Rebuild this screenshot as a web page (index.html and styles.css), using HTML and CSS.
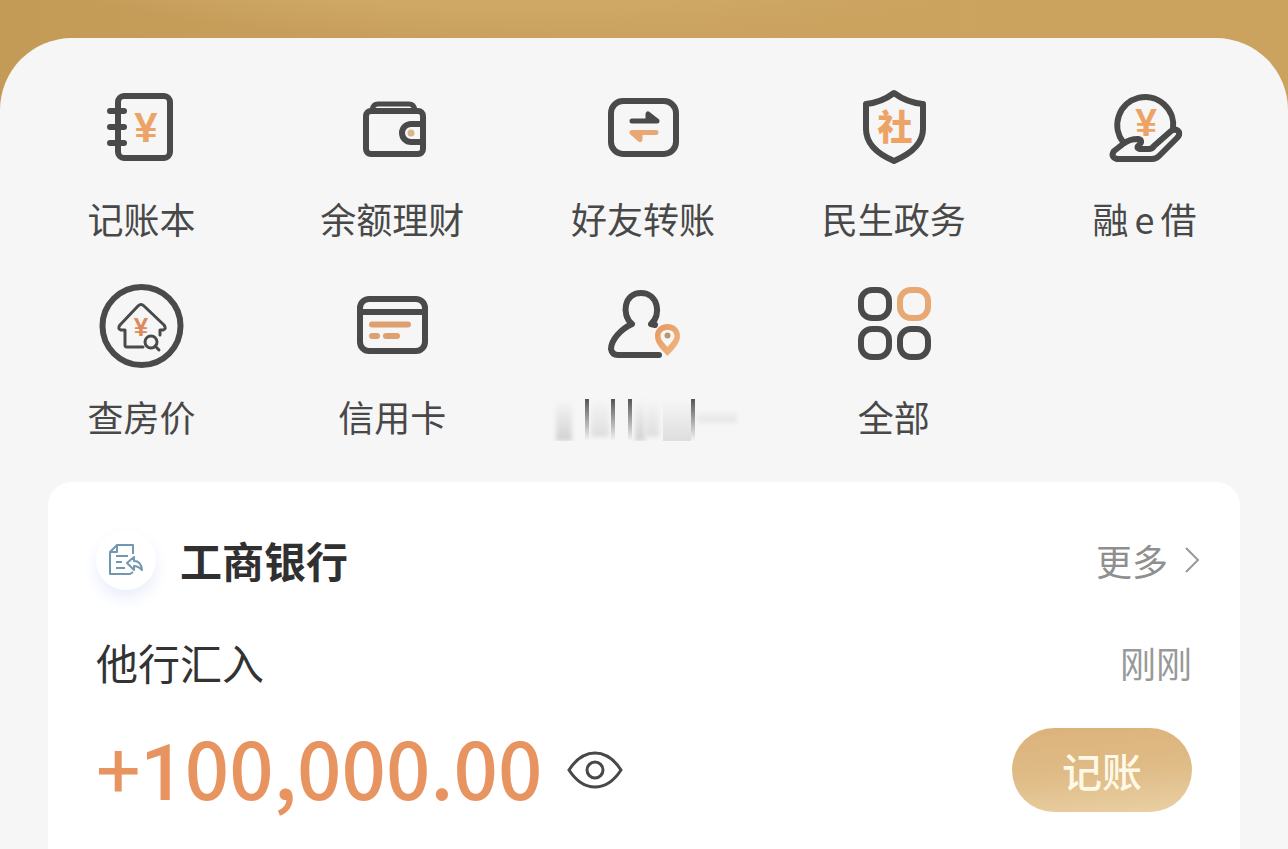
FILE: index.html
```html
<!DOCTYPE html>
<html lang="zh-CN">
<head>
  <meta charset="UTF-8">
  <meta name="viewport" content="width=device-width, initial-scale=1.0">
  <title>工商银行</title>
  <link rel="stylesheet" href="styles.css">
</head>
<body>
  <!-- 渐变色定义 -->
  <svg class="defs" width="0" height="0" aria-hidden="true">
    <defs>
      <linearGradient id="orange" x1="0" y1="0" x2="1" y2="1">
        <stop offset="0" stop-color="#e8955f"/>
        <stop offset="1" stop-color="#efbb85"/>
      </linearGradient>
      <linearGradient id="bar" x1="0" y1="0" x2="0" y2="1">
        <stop offset="0" stop-color="#555"/>
        <stop offset="1" stop-color="#f6f6f6"/>
      </linearGradient>
      <linearGradient id="haze" x1="0" y1="0" x2="0" y2="1">
        <stop offset="0" stop-color="#f6f6f6"/>
        <stop offset="1" stop-color="#d2d2d2"/>
      </linearGradient>
      <linearGradient id="soft" x1="0" y1="0" x2="0" y2="1">
        <stop offset="0" stop-color="#f6f6f6"/>
        <stop offset="1" stop-color="#dedede"/>
      </linearGradient>
    </defs>
  </svg>

  <main class="panel">
    <nav class="menu">
      <a class="menu-item" href="#">
        <svg class="icon" viewBox="0 0 88 88">
          <rect x="21" y="13" width="52" height="62" rx="6"/>
          <path d="M13 28h14M13 44h14M13 60h14"/>
          <text class="glyph yen" x="49" y="59" font-size="42">¥</text>
        </svg>
        <span>记账本</span>
      </a>
      <a class="menu-item" href="#">
        <svg class="icon" viewBox="0 0 88 88">
          <rect x="18" y="28" width="57" height="43" rx="5"/>
          <path class="mid" d="M24 27q1-6 6-6h31q5 0 6 6"/>
          <path d="M74 41H63a9 9 0 0 0 0 18h11"/>
          <circle class="dot" cx="63" cy="50" r="3.5"/>
        </svg>
        <span>余额理财</span>
      </a>
      <a class="menu-item" href="#">
        <svg class="icon" viewBox="0 0 88 88">
          <rect x="12" y="18" width="65" height="53" rx="12"/>
          <path class="mid" d="M33 38h25l-9-7v6"/>
          <path class="mid accent" d="M57 49.5H33l8 7v-6"/>
        </svg>
        <span>好友转账</span>
      </a>
      <a class="menu-item" href="#">
        <svg class="icon" viewBox="0 0 88 88">
          <path d="M44 10C36 16 26 20 16 21V46C16 62 30 72 44 78C58 72 73 62 73 46V21C62 20 52 16 44 10Z"/>
          <text class="glyph" x="45" y="57" font-size="35">社</text>
        </svg>
        <span>民生政务</span>
      </a>
      <a class="menu-item" href="#">
        <svg class="icon" viewBox="0 0 88 88">
          <path d="M22 59A28 28 0 1 1 72 46"/>
          <path d="M13 68L22 61Q28 56 37 56Q42 57 39 61Q34 65 39 66H48Q51 66 53 63L70 48Q75 45 78 49Q79 52 76 55L58 73Q55 76 51 76H16Q9 74 13 68Z"/>
          <text class="glyph yen" x="45" y="53" font-size="39">¥</text>
        </svg>
        <span>融<span class="latin">e</span>借</span>
      </a>
      <a class="menu-item" href="#">
        <svg class="icon" viewBox="0 0 88 88">
          <circle cx="44.5" cy="45" r="39"/>
          <path class="thin" d="M46 66H30q-2 0-2-2V49h-4q-4-1-1-5L41 25q3-3 6 0L67 44q3 4-1 5h-3v5"/>
          <circle class="thin" cx="54" cy="61" r="6"/>
          <path class="thin" d="M58 65l4 4"/>
          <text class="glyph yen house" x="44" y="55" font-size="26">¥</text>
        </svg>
        <span>查房价</span>
      </a>
      <a class="menu-item" href="#">
        <svg class="icon" viewBox="0 0 88 88">
          <rect x="12" y="18" width="65" height="52" rx="9"/>
          <path d="M12 31h65"/>
          <path class="bars" d="M24 43.5h36M24 55h5M38 55h11"/>
        </svg>
        <span>信用卡</span>
      </a>
      <a class="menu-item" href="#" aria-label="附近">
        <svg class="icon" viewBox="0 0 88 88">
          <path d="M56 44l-4-1C63 34 59 12 42 12S22 34 33 43C22 48 12 59 12 68q1 6 7 6h41"/>
          <path class="pin" fill-rule="evenodd" d="M68.5 43C61 43 56 48 56 55c0 8 7 14 12.5 20C74 69 81 63 81 55c0-7-5-12-12.5-12ZM68.5 49c4 0 7 2 7 6 0 4-4 7-7 11-3-4-7-7-7-11 0-4 3-6 7-6Z"/>
          <circle class="pin-dot" cx="68.5" cy="54.5" r="3"/>
        </svg>
        <svg class="smear" viewBox="0 0 192 50">
          <path class="faint" fill="url(#haze)" d="M9 8h16v42H9zM88 8h10v42H88z"/>
          <path class="faint" fill="url(#soft)" d="M44 8h18v38H44zM98 8h14v38H98zM150 22h40v10h-40z"/>
          <path fill="url(#soft)" d="M116 8h28v42h-28z"/>
          <path fill="url(#bar)" d="M38 8h4v42h-4zM64 8h4v42h-4zM81 8h4v42h-4zM144 8h4v42h-4z"/>
        </svg>
      </a>
      <a class="menu-item" href="#">
        <svg class="icon" viewBox="0 0 88 88">
          <rect x="11" y="9" width="28" height="28" rx="11"/>
          <rect class="accent" x="50" y="9" width="28" height="28" rx="11"/>
          <rect x="11" y="48" width="28" height="28" rx="11"/>
          <rect x="50" y="48" width="28" height="28" rx="11"/>
        </svg>
        <span>全部</span>
      </a>
    </nav>

    <section class="card">
      <header class="card-header">
        <div class="badge">
          <svg viewBox="0 0 36 34">
            <path d="M25 11V2H9L2 9v22h20l3-2M9 2v7H2M8 13h12M8 19h6M8 25h9"/>
            <path d="M19 20l7-6v4q7 0 8 9-4-4-8-4v4z"/>
          </svg>
        </div>
        <h1>工商银行</h1>
        <a class="more" href="#">更多
          <svg viewBox="0 0 16 28"><path d="M2 2l12 12L2 26"/></svg>
        </a>
      </header>
      <div class="record">
        <p>他行汇入</p>
        <time>刚刚</time>
      </div>
      <div class="money">
        <strong class="amount">+<span class="one">1</span>00,000.00</strong>
        <button class="eye" type="button" aria-label="隐藏金额">
          <svg viewBox="0 0 56 40">
            <path d="M2 20Q13 3 28 3T54 20Q43 37 28 37T2 20Z"/>
            <circle cx="28" cy="20" r="8"/>
          </svg>
        </button>
        <button class="book-button" type="button">记账</button>
      </div>
    </section>
  </main>
</body>
</html>
```
FILE: styles.css
```css
* {
  box-sizing: border-box;
  margin: 0;
  padding: 0;
}
body {
  font-family: 'Noto Sans CJK SC', sans-serif;
  min-height: 100vh;
  padding-top: 38px;
  display: flex;
  flex-direction: column;
  color: #484848;
  background: radial-gradient(ellipse 500px 80px at 40% -40px, #cfa866 60%, transparent), linear-gradient(90deg, #c49a57, #cba25f 50%, #cca35e);
}
a {
  color: inherit;
  text-decoration: none;
}
button {
  border: none;
  background: none;
  font-family: inherit;
  cursor: pointer;
}
.defs {
  position: absolute;
}
.panel {
  flex: 1;
  display: flex;
  flex-direction: column;
  padding-top: 45px;
  background: #f6f6f6;
  border-radius: 72px 72px 0 0;
}

/* 功能菜单 */
.menu {
  display: grid;
  grid-template-columns: repeat(5, 1fr);
  row-gap: 38px;
  padding: 0 18px 0 16px;
}
.menu-item {
  display: flex;
  flex-direction: column;
  align-items: center;
  gap: 22px;
  font-size: 36px;
  line-height: 50px;
  white-space: nowrap;
}
.latin {
  margin: 0 6px;
}
.icon {
  width: 88px;
  height: 88px;
  fill: none;
  stroke: #4a4a4a;
  stroke-width: 6;
  stroke-linecap: round;
  stroke-linejoin: round;
}
.icon .mid {
  stroke-width: 5;
}
.icon .thin {
  stroke-width: 3;
}
.icon .accent {
  stroke: #e8a873;
}
.icon .bars {
  stroke: #dfa070;
  stroke-width: 6;
}
.icon .dot {
  fill: #d9b58a;
  stroke: none;
}
.icon .pin {
  fill: url(#orange);
  stroke: none;
}
.icon .pin-dot {
  fill: #b9976f;
  stroke: none;
}
.glyph {
  fill: #eda366;
  stroke: none;
  font-weight: 900;
  text-anchor: middle;
}
.yen {
  font-family: 'Liberation Sans', Arial, sans-serif;
  font-weight: 700;
}
.house {
  fill: #dd8a5c;
}
.smear {
  width: 192px;
  height: 50px;
}
.faint {
  filter: blur(2px);
}

/* 动账卡片 */
.card {
  flex: 1;
  display: flex;
  flex-direction: column;
  gap: 36px;
  margin: 41px 48px 0;
  padding: 42px 48px 36px;
  background: #fff;
  border-radius: 24px 24px 0 0;
}
.card-header,
.record,
.money {
  display: flex;
  align-items: center;
}
.card-header {
  height: 72px;
}
.badge {
  width: 60px;
  height: 60px;
  margin-right: 24px;
  display: flex;
  align-items: center;
  justify-content: center;
  border-radius: 50%;
  background: #fff;
  box-shadow: 0 8px 16px #e9eefb;
}
.badge svg {
  width: 36px;
  height: 34px;
  fill: none;
  stroke: #7297b0;
  stroke-width: 2;
  stroke-linejoin: round;
}
.card-header h1 {
  font-size: 42px;
  line-height: 60px;
  font-weight: 700;
  color: #303030;
}
.more {
  display: flex;
  align-items: center;
  gap: 16px;
  margin-left: auto;
  margin-right: -8px;
  font-size: 36px;
  line-height: 60px;
  color: #8f8f8f;
}
.more svg {
  width: 16px;
  height: 28px;
  fill: none;
  stroke: #999;
  stroke-width: 2;
}
.record {
  justify-content: space-between;
  line-height: 60px;
}
.record p {
  font-size: 42px;
  color: #333;
}
.record time {
  font-size: 36px;
  color: #999;
}
.money {
  height: 84px;
}
.amount {
  font-size: 78px;
  line-height: 84px;
  font-weight: 500;
  color: #e89461;
}
.one {
  font-family: Roboto, sans-serif;
}
.eye {
  width: 56px;
  height: 40px;
  margin-left: 24px;
}
.eye svg {
  display: block;
  fill: none;
  stroke: #484848;
  stroke-width: 3;
}
.book-button {
  width: 180px;
  height: 84px;
  margin-left: auto;
  border-radius: 42px;
  background: linear-gradient(175deg, #dcb27a, #dfbb86 50%, #ead0a4);
  color: #fff9e6;
  font-size: 40px;
  line-height: 80px;
  font-weight: 500;
}
```
